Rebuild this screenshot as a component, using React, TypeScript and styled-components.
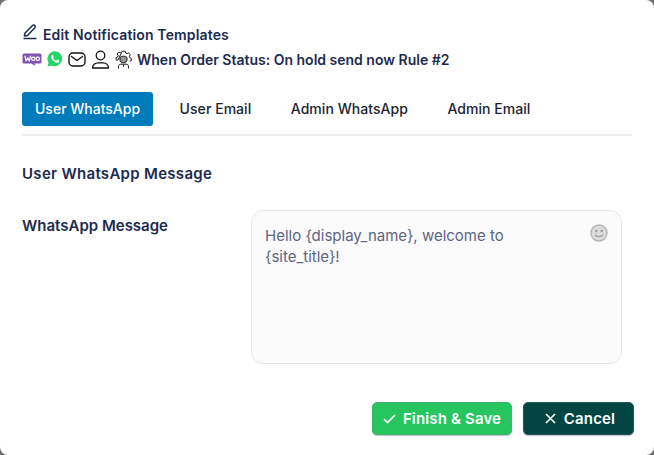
import React from 'react';
import styled, { createGlobalStyle } from 'styled-components';

const GlobalStyle = createGlobalStyle`
  html, body {
    margin: 0;
    padding: 0;
    background: #6f6f6f;
  }
  * {
    box-sizing: border-box;
  }
`;

const Modal = styled.div`
  width: 654px;
  height: 455px;
  background: #fff;
  border-radius: 8px;
  overflow: hidden;
  padding: 23px 22px 0;
  font-family: Inter, 'Liberation Sans', sans-serif;
  color: #1d2b4f;
`;

const Title = styled.div`
  display: flex;
  align-items: center;
  gap: 4px;
  height: 22px;
  font-size: 14px;
  letter-spacing: 0.14px;
  font-weight: 600;
`;

const RuleRow = styled.div`
  display: flex;
  align-items: center;
  gap: 5px;
  height: 24px;
  margin-top: 2px;
  font-size: 14px;
  font-weight: 600;
`;

const Tabs = styled.div`
  display: flex;
  gap: 13.5px;
  margin-top: 21px;
  width: 610px;
  height: 44px;
  border-bottom: 2px solid #eceef1;
`;

const Tab = styled.div<{ $active?: boolean }>`
  height: 34px;
  padding: 0 13px 2px;
  display: flex;
  align-items: center;
  border-radius: 3px;
  font-size: 14px;
  letter-spacing: ${p => (p.$active ? 0 : '0.05px')};
  font-weight: 500;
  color: ${p => (p.$active ? '#fff' : '#1c2333')};
  background: ${p => (p.$active ? '#007cba' : 'transparent')};
`;

const SectionTitle = styled.h3`
  margin: 28px 0 0;
  font-size: 15px;
  letter-spacing: 0.3px;
  line-height: 20px;
  font-weight: 600;
`;

const FieldRow = styled.div`
  display: grid;
  grid-template-columns: 229px 371px;
  margin-top: 26px;
`;

const FieldLabel = styled.label`
  font-size: 15px;
  line-height: 20px;
  font-weight: 600;
  margin-top: 6px;
`;

const MessageBox = styled.div`
  position: relative;
  height: 154px;
  padding: 14px 13px;
  background: #fbfbfc;
  border: 1px solid #e4e6ef;
  border-radius: 12px;
  font-size: 15px;
  line-height: 21px;
  color: #5b6583;
`;

const Emoji = styled.svg`
  position: absolute;
  top: 13px;
  right: 13px;
  width: 18px;
  height: 18px;
`;

const Footer = styled.div`
  display: flex;
  justify-content: flex-end;
  gap: 11px;
  margin-top: 38px;
  margin-right: -2px;
`;

const ActionButton = styled.button<{ $width: number; $bg: string; $edge: string }>`
  width: ${p => p.$width}px;
  height: 33px;
  display: flex;
  align-items: center;
  justify-content: center;
  gap: 7px;
  border: 1px solid ${p => p.$edge};
  border-radius: 5px;
  background: ${p => p.$bg};
  box-shadow: 0 1px 1px rgba(60, 60, 110, 0.35);
  color: #fff;
  font-family: inherit;
  font-size: 15px;
  letter-spacing: 0.15px;
  font-weight: 600;
`;

const CancelLabel = styled.span`
  margin-right: -3px;
  padding-left: 1px;
`;

const PenIcon = () => (
  <svg width="17" height="17" viewBox="0 0 17 17" fill="none" stroke="#1d2b4f" strokeWidth="1.5" style={{ marginTop: -5 }}>
    <path d="M3 10 10.500 2.500a1.600 1.600 0 0 1 2.300 2.300L5.500 12.500 2.400 13z" strokeLinejoin="round" />
    <path d="M1.500 15.500h13" />
  </svg>
);

const WooIcon = () => (
  <svg width="20" height="13" viewBox="0 0 20 13">
    <path d="M2 .5h16A1.5 1.5 0 0 1 19.5 2v7a1.5 1.5 0 0 1-1.5 1.5h-5.5L13 13l-3.5-2.5H2A1.5 1.5 0 0 1 .5 9V2A1.5 1.5 0 0 1 2 .5z" fill="#7f54b3" />
    <path d="M3 3.2 4 8l1.8-3.2L7.3 8 8.500 3.200" fill="none" stroke="#fff" strokeWidth="1.2" strokeLinecap="round" strokeLinejoin="round" />
    <circle cx="11.3" cy="5.8" r="1.7" fill="none" stroke="#fff" strokeWidth="1.2" />
    <circle cx="15.8" cy="5.8" r="1.7" fill="none" stroke="#fff" strokeWidth="1.2" />
  </svg>
);

const WhatsAppIcon = () => (
  <svg width="16" height="16" viewBox="0 0 16 16">
    <path d="M8 .3a7.5 7.5 0 0 0-6.400 11.400L.5 15.600l4-1A7.5 7.5 0 1 0 8 .3z" fill="#25d366" />
    <path d="M5.600 3.900c-.4 0-1.300.7-1.300 2 0 1.500 1 3 2.700 4.300 1.400 1.100 2.800 1.600 3.800 1.500 1-.2 1.700-1 1.700-1.800 0-.3-.1-.4-.3-.5l-1.600-.8c-.3-.1-.4 0-.6.2l-.7.8c-.2.2-.3.2-.6.1-1.100-.5-2-1.300-2.600-2.400-.1-.2-.1-.4.1-.5l.5-.7c.1-.2.1-.3 0-.5l-.7-1.600c-.1-.2-.2-.3-.4-.1z" fill="#fff" />
  </svg>
);

const MailIcon = () => (
  <svg width="18" height="15" viewBox="0 0 18 15" fill="none" stroke="#111" strokeWidth="1.4">
    <rect x="1" y="1" width="16" height="13" rx="4" />
    <path d="M3.500 4.500 9 8.500l5.500-4" strokeLinecap="round" strokeLinejoin="round" />
  </svg>
);

const UserIcon = () => (
  <svg width="19" height="19" viewBox="0 0 19 19" fill="none" stroke="#111" strokeWidth="1.3">
    <circle cx="9.500" cy="5.500" r="4.300" />
    <path d="M1.500 18c0-3.300 2.500-5.200 5.500-5.200h5c3 0 5.500 1.900 5.500 5.200z" strokeLinejoin="round" />
  </svg>
);

const AgentIcon = () => (
  <svg width="17" height="19" viewBox="0 0 17 19" fill="none" stroke="#1a1a1a" strokeWidth="1">
    <path d="M6.800 1.200h3.400l.4 1.700 1.500.7 1.500-.8 1.700 2-1 1.400.5 1.600 1.500.6v2.300l-1.700.4M2.800 10.300l-1.700-.4V7.600l1.500-.6.500-1.600-1-1.400 1.700-2 1.500.8 1.500-.7z" strokeLinejoin="round" />
    <path d="M5 7.500c1-1.800 6-1.800 7 0v2.500c0 1.500-1.500 2.800-3.500 2.800S5 11.500 5 10z" fill="#1a1a1a" fillOpacity="0.45" />
    <path d="M3.500 18.500v-2.300c0-1.200 1-2 2.200-2h5.600c1.200 0 2.200.8 2.200 2v2.300" />
    <path d="M8.500 14.500v2" />
  </svg>
);

const CheckIcon = () => (
  <svg width="13" height="13" viewBox="0 0 13 13" fill="none" stroke="#fff" strokeWidth="1.600">
    <path d="M1 7l3.500 3.500L12 3" />
  </svg>
);

const CloseIcon = () => (
  <svg width="11" height="11" viewBox="0 0 11 11" fill="none" stroke="#fff" strokeWidth="1.600">
    <path d="M1 1l9 9M10 1l-9 9" />
  </svg>
);

const App: React.FC = () => {
  return (
    <>
      <GlobalStyle />
      <Modal>
        <Title>
          <PenIcon />
          <span>Edit Notification Templates</span>
        </Title>
        <RuleRow>
          <WooIcon />
          <WhatsAppIcon />
          <MailIcon />
          <UserIcon />
          <AgentIcon />
          <span>When Order Status: On hold send now Rule #2</span>
        </RuleRow>
        <Tabs>
          <Tab $active>User WhatsApp</Tab>
          <Tab>User Email</Tab>
          <Tab>Admin WhatsApp</Tab>
          <Tab>Admin Email</Tab>
        </Tabs>
        <SectionTitle>User WhatsApp Message</SectionTitle>
        <FieldRow>
          <FieldLabel>WhatsApp Message</FieldLabel>
          <MessageBox>
            Hello {'{display_name}'}, welcome to
            <br />
            {'{site_title}'}!
            <Emoji viewBox="0 0 18 18">
              <circle cx="9" cy="9" r="8" fill="#dcdcdc" stroke="#b4b4b4" strokeWidth="1.4" />
              <circle cx="6.300" cy="7" r="1.200" fill="#9a9a9a" />
              <circle cx="11.700" cy="7" r="1.200" fill="#9a9a9a" />
              <path d="M5 10.800c1 2.300 7 2.300 8 0" fill="none" stroke="#9a9a9a" strokeWidth="1.200" />
            </Emoji>
          </MessageBox>
        </FieldRow>
        <Footer>
          <ActionButton $width={140} $bg="#25c65f" $edge="#3db56b">
            <CheckIcon />
            Finish &amp; Save
          </ActionButton>
          <ActionButton $width={111} $bg="#024543" $edge="#245a5c">
            <CloseIcon />
            <CancelLabel>Cancel</CancelLabel>
          </ActionButton>
        </Footer>
      </Modal>
    </>
  );
};

export default App;
